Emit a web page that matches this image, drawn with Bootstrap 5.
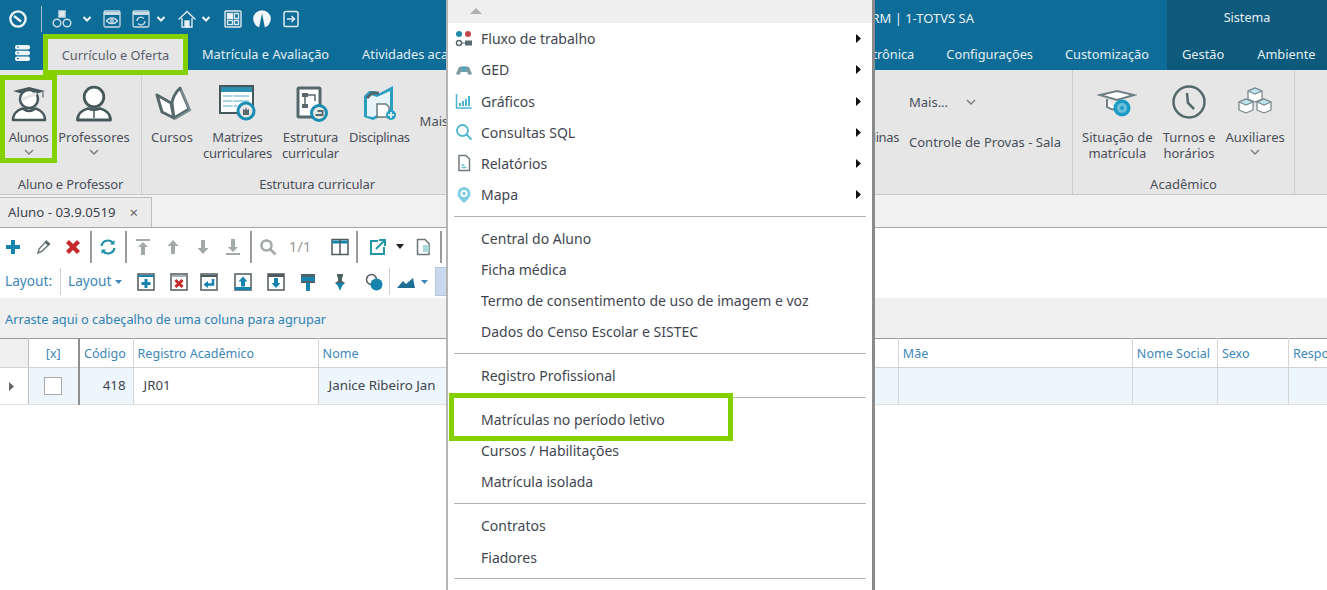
<!DOCTYPE html>
<html lang="pt-BR"><head><meta charset="utf-8"><title>TOTVS RM</title>
<link href="https://cdn.jsdelivr.net/npm/bootstrap@5.3.0/dist/css/bootstrap.min.css" rel="stylesheet">
<style>
html,body{margin:0;height:590px;overflow:hidden;background:#fff}
body{font-family:"Noto Sans","Open Sans",sans-serif;font-size:13px;color:#4a4f57;width:1327px;position:relative}
svg{display:block;flex:none}
.titlebar{height:36px;background:#0e6d98;color:#e8f0f4;padding-top:1px}
.sysbox{width:160px;background:#0d5a7c;height:36px;margin-top:-1px;padding-top:1px;justify-content:center;font-size:12.6px}
.qsep{width:1px;height:26px;background:#9fc0d0}
.g3{margin-left:3px}.g4{margin-left:4px}.g5{margin-left:5px}.g6{margin-left:6px}.g7{margin-left:7px}.g8{margin-left:8px}.g9{margin-left:9px}.g10{margin-left:10px}.g11{margin-left:11px}.g12{margin-left:12px}.g13{margin-left:13px}.g14{margin-left:14px}.g15{margin-left:15px}.g16{margin-left:16px}.g19{margin-left:19px}
.orgname{margin-right:193px;font-size:13px}
.tabsbar{height:34px;background:#0e6d98;color:#e4eef3;font-size:12.8px}
.tablink{white-space:nowrap;line-height:36px}
.tabs-l{gap:33px;margin-left:19px}.tabs-r{gap:32px;padding-right:18px}
.menuglyph{width:48px;padding-left:14px}
.tabon{position:relative;z-index:2;width:135px;height:31px;margin-top:3px;background:#e6e6e6;color:#59606a;outline:5px solid #84d000;text-align:center;line-height:32px}
.sysnav{width:160px;background:#0d5a7c;gap:33px;padding-left:15px;overflow:hidden}
.ribbon{height:125px;background:#e6e6e6;border-bottom:1px solid #c9c9c9;color:#4a4f5a}
.rgroup{border-right:1px solid #cfcfcf;height:100%}
.g1w{width:142px}.g2w{width:351px}.g3w{width:580px}.g4w{width:222px}
.ritems{flex:1 1 auto;min-height:0}
.ritem{padding-top:13px;line-height:16px;text-align:center}
.ritem svg{margin-bottom:6px}
.tight1{letter-spacing:-.15px}.tight2{letter-spacing:-.25px}.tight3{letter-spacing:-.4px}
.gi2{gap:10px;padding-left:9px}
.gi3{gap:10px;padding-right:11px;justify-content:flex-end}
.gi4{gap:10px;padding-left:9px}
.rstudent{width:57px;padding-top:8px;height:88px;margin-top:5px;box-shadow:inset 0 0 0 5px #84d000}
.rteacher{width:72px;padding-top:13px;margin-left:1px}
.chev{margin-top:4px}
.rlabel{text-align:center;line-height:20px;height:20px}
.rstack{padding-top:22px;text-align:left}
.rmore{gap:18px;height:20px;line-height:20px}
.rctrl{margin-top:20px;line-height:20px;white-space:nowrap;letter-spacing:.03px}
.rmaisl{padding-top:43px;line-height:16px}
.docstrip{height:33px;background:#f1f1f1;border-bottom:1px solid #a8a8a8;align-items:flex-end}
.doctab{width:152px;height:30px;background:#ececec;border:1px solid #bdbdbd;border-left:0;border-bottom:0;padding-left:8px;gap:14px;line-height:28px;color:#3d434c;font-size:13.25px}
.xmark{color:#666;font-size:15px;line-height:28px}
.bar1{height:37px;background:#fff}
.bar2{height:33px;background:#fff;color:#3d87b6;font-size:13.7px}
.bsep{width:2px;height:32px;background:#9a9a9a}
.bsepl{width:1px;height:27px;background:#d0d0d0}
.counter{width:24px;color:#9a9a9a;font-size:15px;text-align:center;white-space:nowrap}
.lay1{width:48px}.lay2{width:44px;white-space:nowrap}
.selbox{width:14px;height:29px;background:#c9d8ef;border:1px solid #b4c7e4}
.groupbar{height:40px;background:#f0f0f0;color:#2f82b4;padding-left:5px;line-height:42px;font-size:12.72px}
.gridbox{width:1327px;overflow:hidden}
.gridtb{table-layout:fixed;width:1420px;margin:0;border-collapse:collapse;--bs-table-bg:transparent;border-top:1px solid #9a9a9a}
.gridtb th,.gridtb td{padding:0 4px;font-weight:400;border-right:1px solid #d6d6d6;border-bottom:1px solid #e0e0e0;overflow:hidden;white-space:nowrap;box-shadow:none}
.gridtb th{height:29px;padding-top:3px;font-size:12.55px;color:#3d87b6;background:#fff;border-bottom-color:#d2d2d2;vertical-align:middle}
.gridtb td{height:37px;font-size:13.3px;background:#edf5fd;color:#3f444c;vertical-align:middle}
.gridtb .corner{background:#f0f0f0;border-right-color:#bdbdbd}
.gridtb .rowmark{background:#fff;border-right-color:#bdbdbd;padding:0 0 0 9px}
.gridtb .boxcol{border-right:2px solid #8f8f8f}
.gridtb .cellwhite{background:#fff;padding-left:10px}
.gridtb .cellname{padding-left:10px}
.gridtb .tnum{text-align:right;padding-right:7px}
.markcell{text-align:center;color:#3d87b6}
.cbox{display:block;width:18px;height:18px;margin:auto;background:#fff;border:1px solid #a9a9a9}
.c0{width:28px}.c1{width:51px}.c2{width:54px}.c3{width:185px}.c4{width:541px}.c5{width:39px}.c6{width:234px}.c7{width:85px}.c8{width:71px}.c9{width:131px}
.popmenu.dropdown-menu{position:absolute;z-index:5;display:block;left:446px;top:0;width:429px;height:590px;margin:0;padding:0;background:#fff;border:0;border-left:2px solid #b5b5b5;border-right:3px solid #8a8a8a;border-radius:0;box-shadow:none;overflow:hidden;font-size:14px}
.pophead{height:23px;background:#efefef;padding:8px 0 0 22px}
.popmenu .dropdown-item{height:31.15px;padding:.5px 0 0 7px;display:flex;align-items:center;gap:8px;color:#3f4650;position:relative;width:424px}
.mico{width:18px;height:18px;flex:none}
.arr{margin-left:auto;margin-right:11px}
.popmenu .dropdown-divider{margin:5.9px 8px 5.9px 6px;border-top:1px solid #b3b3b3;opacity:1;width:412px}
.flagged::after{content:"";position:absolute;left:1px;top:-11px;width:284px;height:48px;border:5px solid #84d000;pointer-events:none}
.popmenu .dropdown-item:hover,.popmenu .dropdown-item:focus{background:transparent;color:#3f4650}
</style></head>
<body>
<div class="titlebar d-flex align-items-center">
  <svg class="g8" width="20" height="20" viewBox="0 0 20 20" fill="none" stroke="#eef4f7" stroke-width="2.4"><circle cx="10" cy="10" r="7.6"/><path d="M6 7l7 5.500"/></svg>
  <span class="qsep g13"></span>
  <svg class="g10" width="20" height="20" viewBox="0 0 20 20" fill="none" stroke="#c9dbe4" stroke-width="1.500"><rect x="7" y="2" width="6" height="6" fill="#dfeaf0"/><circle cx="5" cy="14" r="3.800"/><circle cx="15" cy="14" r="3.800"/></svg>
  <svg class="g10" width="10" height="8" viewBox="0 0 10 8" fill="none" stroke="#eef4f7" stroke-width="2"><path d="M1.500 2l3.500 3.500L8.500 2"/></svg>
  <svg class="g10" width="20" height="20" viewBox="0 0 20 20" fill="none" stroke="#c9dbe4" stroke-width="1.300"><rect x="2" y="2" width="16" height="16" rx="1.500"/><path d="M2 4.500h16" stroke-width="3"/><path d="M4.500 12c3-4 8-4 11 0-3 3.500-8 3.500-11 0z"/><circle cx="10" cy="12" r="1.300"/></svg>
  <svg class="g9" width="20" height="20" viewBox="0 0 20 20" fill="none" stroke="#c9dbe4" stroke-width="1.300"><rect x="2" y="2" width="16" height="16" rx="1.500"/><path d="M2 4.500h16" stroke-width="3"/><path d="M6 12a4 4 0 0 1 7-2.500M14 12a4 4 0 0 1-7 2.500"/></svg>
  <svg class="g5" width="10" height="8" viewBox="0 0 10 8" fill="none" stroke="#eef4f7" stroke-width="2"><path d="M1.500 2l3.500 3.500L8.500 2"/></svg>
  <svg class="g11" width="20" height="20" viewBox="0 0 20 20" fill="none" stroke="#dfeaf0" stroke-width="1.400"><path d="M1.500 10.500L10 2.500l8.500 8M5 9v9h10V9"/><rect x="8" y="12" width="4" height="6" fill="#eef4f7"/></svg>
  <svg class="g4" width="10" height="8" viewBox="0 0 10 8" fill="none" stroke="#eef4f7" stroke-width="2"><path d="M1.500 2l3.500 3.500L8.500 2"/></svg>
  <svg class="g12" width="20" height="20" viewBox="0 0 20 20" fill="none" stroke="#dfeaf0" stroke-width="1.400"><rect x="2" y="2" width="16" height="16" rx="1"/><rect x="4.500" y="4.500" width="5" height="5" fill="#eef4f7"/><rect x="11.500" y="4.500" width="4" height="5"/><rect x="4.500" y="11.500" width="5" height="4"/><rect x="11.500" y="11.500" width="4" height="4"/></svg>
  <svg class="g9" width="20" height="20" viewBox="0 0 20 20"><circle cx="10" cy="10" r="8.800" fill="#f2f6f8"/><path d="M10 4.500L7 19h6z" fill="#0e6d98"/></svg>
  <svg class="g9" width="20" height="20" viewBox="0 0 20 20" fill="none" stroke="#dfeaf0" stroke-width="1.500"><path d="M3 4.500V16a1.500 1.500 0 0 0 1.500 1.500h11A1.500 1.500 0 0 0 17 16V4.500A2 2 0 0 0 15 2.500H5a2 2 0 0 0-2 2z"/><path d="M6 10h7M10.500 7l3 3-3 3"/></svg>
  <span class="ms-auto orgname text-nowrap">RM | 1-TOTVS SA</span>
  <span class="sysbox d-flex align-items-center">Sistema</span>
</div>
<div class="tabsbar d-flex">
  <div class="menuglyph d-flex align-items-center flex-none"><svg width="17" height="18" viewBox="0 0 17 18" fill="#f1f6f8"><rect x="1" y="1" width="15" height="4.500" rx="2"/><rect x="1" y="6.700" width="15" height="4.500" rx="2"/><rect x="1" y="12.400" width="15" height="4.500" rx="2"/><path d="M3 3h2M3 9h2M3 14.500h2" stroke="#0e6d98"/></svg></div>
  <div class="tabon">Currículo e Oferta</div>
  <div class="tabs-l d-flex flex-grow-1 overflow-hidden"><span class="tablink">Matrícula e Avaliação</span><span class="tablink">Atividades acadêmicas</span></div>
  <div class="tabs-r d-flex"><span class="tablink">Secretaria Eletrônica</span><span class="tablink">Configurações</span><span class="tablink">Customização</span></div>
  <div class="sysnav d-flex"><span class="tablink">Gestão</span><span class="tablink">Ambiente</span></div>
</div>
<div class="ribbon d-flex">
  <section class="rgroup g1w d-flex flex-column">
    <div class="ritems d-flex">
      <div class="ritem rstudent tight3 d-flex flex-column align-items-center">
        <svg width="40" height="40" viewBox="0 0 40 40"><path d="M4 8L20 4l16 4-16 5z" fill="#46585c"/><path d="M34 8.500v6" stroke="#7a8a8e" stroke-width="1.500"/><circle cx="20" cy="16" r="9" fill="#fff" stroke="#46585c" stroke-width="2.500"/><path d="M12 15l15-6 1 3-15 6z" fill="#e6e6e6"/><path d="M4 37c0-6 4.500-10 9.500-11.500 4 3 9 3 13 0C31.500 27 36 31 36 37z" fill="#fff" stroke="#46585c" stroke-width="2.500" stroke-linejoin="round"/></svg>
        Alunos
        <svg class="chev" width="10" height="7" viewBox="0 0 10 7" fill="none" stroke="#7b8185" stroke-width="1.500"><path d="M1 1l4 4 4-4"/></svg>
      </div>
      <div class="ritem rteacher d-flex flex-column align-items-center">
        <svg width="40" height="40" viewBox="0 0 40 40" fill="#fff" stroke="#46585c" stroke-width="2.800"><circle cx="20" cy="14" r="9.800"/><path d="M3.500 37c0-6 5-10 10.500-11.500 4 1.500 8 1.500 12 0C31.500 27 36.500 31 36.500 37z" stroke-linejoin="round"/><path d="M20 27v8" stroke-width="1.500"/></svg>
        Professores
        <svg class="chev" width="10" height="7" viewBox="0 0 10 7" fill="none" stroke="#7b8185" stroke-width="1.500"><path d="M1 1l4 4 4-4"/></svg>
      </div>
    </div>
    <div class="rlabel tight1">Aluno e Professor</div>
  </section>
  <section class="rgroup g2w d-flex flex-column">
    <div class="ritems d-flex gi2 text-nowrap">
      <div class="ritem"><svg class="mx-auto" width="40" height="40" viewBox="0 0 40 40"><path d="M5 12l14 8 3 15L10 29z" fill="#fff" stroke="#56686c" stroke-width="3" stroke-linejoin="round"/><path d="M20 20c1-7 5-12 8-15l9 21-15 9z" fill="#fff" stroke="#56686c" stroke-width="2.800" stroke-linejoin="round"/><path d="M29 7l9 20-15 9" fill="none" stroke="#7d8c90" stroke-width="2"/></svg>Cursos</div>
      <div class="ritem tight2"><svg class="mx-auto" width="40" height="40" viewBox="0 0 40 40"><rect x="3" y="3" width="33" height="27" fill="#fff" stroke="#46585c" stroke-width="2"/><rect x="4" y="4" width="31" height="5" fill="#2c8fb0"/><path d="M6 13h26M6 18h26M6 23h14" stroke="#a8d4e6" stroke-width="2"/><path d="M16 11v14" stroke="#fff"/><circle cx="29" cy="28" r="8" fill="#e6e6e6" stroke="#1a8db2" stroke-width="3"/><path d="M26 32v-6l2 1 1-3 1 3 2-1v6z" fill="#5a6a6e"/></svg>Matrizes<br>curriculares</div>
      <div class="ritem tight1"><svg class="mx-auto" width="40" height="40" viewBox="0 0 40 40" fill="none"><rect x="7" y="5" width="22" height="29" rx="1" fill="#fff" stroke="#56686c" stroke-width="3"/><path d="M11 10h6v4h-6zM11 21h6v4h-6z" fill="#56686c"/><path d="M17 12h7v6M14 14v7" stroke="#56686c" stroke-width="1.500"/><circle cx="28" cy="30" r="7.500" fill="#e6e6e6" stroke="#1a8db2" stroke-width="3"/><path d="M24.500 32h7v-4h-5" stroke="#56686c" stroke-width="2"/></svg>Estrutura<br>curricular</div>
      <div class="ritem tight3"><svg class="mx-auto" width="40" height="40" viewBox="0 0 40 40" fill="none"><path d="M5 34V13l5-5h7l2 3 15-8v25L14 37z" fill="#2b9fc2"/><path d="M8 33V15l4-3 6 2 13-6v18L14 34z" fill="#e6f3f7"/><path d="M8 15l5-5h7" stroke="#55666a" stroke-width="3"/><path d="M18 21h9l3 3v10H18z" fill="#fff" stroke="#6c7b7f" stroke-width="1.500"/><circle cx="32" cy="32" r="5" fill="#2b9fc2"/><path d="M29 32h6M32 29v6" stroke="#fff" stroke-width="1.500"/></svg>Disciplinas</div>
      <div class="ritem rmaisl">Mais...</div>
    </div>
    <div class="rlabel tight1">Estrutura curricular</div>
  </section>
  <section class="rgroup g3w d-flex flex-column">
    <div class="ritems d-flex gi3 text-nowrap">
      <div class="ritem tight3"><svg class="mx-auto" width="40" height="40" viewBox="0 0 40 40"></svg>Disciplinas</div>
      <div class="rstack">
        <div class="rmore d-flex align-items-center">Mais...<svg width="10" height="7" viewBox="0 0 10 7" fill="none" stroke="#7b8185" stroke-width="1.500"><path d="M1 1l4 4 4-4"/></svg></div>
        <div class="rctrl">Controle de Provas - Sala</div>
      </div>
    </div>
    <div class="rlabel">&nbsp;</div>
  </section>
  <section class="rgroup g4w d-flex flex-column">
    <div class="ritems d-flex gi4 text-nowrap">
      <div class="ritem"><svg class="mx-auto" width="40" height="40" viewBox="0 0 40 40"><path d="M3 12L20 8l17 4-17 5z" fill="#fff" stroke="#6f8084" stroke-width="2"/><path d="M10 16v8c3 2 6 3 9 3" fill="#fff" stroke="#6f8084" stroke-width="2"/><circle cx="25" cy="25" r="8.500" fill="#1b9bc4"/><circle cx="25" cy="25" r="5" fill="#6ec0da"/><circle cx="25" cy="25" r="2" fill="#1b9bc4"/></svg>Situação de<br>matrícula</div>
      <div class="ritem"><svg class="mx-auto" width="40" height="40" viewBox="0 0 40 40" fill="none" stroke="#56686c" stroke-width="2.500"><circle cx="20" cy="19" r="15.500"/><path d="M18 10l1 10 6 6"/></svg>Turnos e<br>horários</div>
      <div class="ritem d-flex flex-column align-items-center"><svg width="40" height="40" viewBox="0 0 40 40" stroke="#7a8a8e" stroke-width="1.300" stroke-linejoin="round"><path d="M13 8l7-3 7 3v8l-7 3-7-3z" fill="#fff"/><path d="M13 8l7 3 7-3-7-3z" fill="#bfe4ee"/><path d="M4 19l7-3 7 3v8l-7 3-7-3z" fill="#fff"/><path d="M4 19l7 3 7-3-7-3z" fill="#bfe4ee"/><path d="M22 19l7-3 7 3v8l-7 3-7-3z" fill="#fff"/><path d="M22 19l7 3 7-3-7-3z" fill="#bfe4ee"/></svg>Auxiliares<svg class="chev" width="10" height="7" viewBox="0 0 10 7" fill="none" stroke="#7b8185" stroke-width="1.500"><path d="M1 1l4 4 4-4"/></svg></div>
    </div>
    <div class="rlabel">Acadêmico</div>
  </section>
</div>
<div class="docstrip d-flex"><div class="doctab d-flex">Aluno - 03.9.0519<span class="xmark">×</span></div></div>
<div class="bar1 d-flex align-items-center">
  <svg class="g4" width="18" height="18" viewBox="0 0 18 18"><path d="M7 2h4v5h5v4h-5v5H7v-5H2V7h5z" fill="#1583ad"/></svg>
  <svg class="g13" width="18" height="18" viewBox="0 0 18 18" fill="none" stroke="#707a7d" stroke-width="1.500"><path d="M3 15l1-4 7.500-8 3 3-8 7.500z" fill="#fff"/><path d="M10.500 4l3.500 3" stroke="#4f6266" stroke-width="2"/></svg>
  <svg class="g11" width="18" height="18" viewBox="0 0 18 18"><path d="M2 5l3-3 4 4 4-4 3 3-4 4 4 4-3 3-4-4-4 4-3-3 4-4z" fill="#c62a2a"/></svg>
  <span class="bsep g8"></span>
  <svg class="g7" width="18" height="18" viewBox="0 0 18 18" fill="none" stroke="#1d8fa8" stroke-width="2.200"><path d="M2.500 8a6.500 6.500 0 0 1 11.500-3"/><path d="M15.500 10a6.500 6.500 0 0 1-11.500 3"/><path d="M15.500 2v4.500H11z" fill="#1d8fa8" stroke="none"/><path d="M2.500 16v-4.500H7z" fill="#1d8fa8" stroke="none"/></svg>
  <span class="bsep g8"></span>
  <svg class="g7" width="18" height="18" viewBox="0 0 18 18" fill="#a3a8a8"><path d="M2 1h14v2H2zM9 4l5 5h-3v8H7V9H4z"/></svg>
  <svg class="g12" width="18" height="18" viewBox="0 0 18 18" fill="#a3a8a8"><path d="M9 2l5.500 6H11v8H7V8H3.500z"/></svg>
  <svg class="g12" width="18" height="18" viewBox="0 0 18 18" fill="#a3a8a8"><path d="M9 16l5.500-6H11V2H7v8H3.500z"/></svg>
  <svg class="g12" width="18" height="18" viewBox="0 0 18 18" fill="#a3a8a8"><path d="M2 15h14v2H2zM9 14l5-5h-3V1H7v8H4z"/></svg>
  <span class="bsep g8"></span>
  <svg class="g7" width="18" height="18" viewBox="0 0 18 18" fill="none" stroke="#a3a8a8" stroke-width="2.500"><circle cx="7.500" cy="7.500" r="5"/><path d="M11 11l5.500 5.500"/></svg>
  <span class="counter g11">1/1</span>
  <svg class="g19" width="18" height="18" viewBox="0 0 18 18" fill="none" stroke="#4f5a5e" stroke-width="1.500"><rect x="1" y="1.500" width="16" height="15" fill="#fff"/><path d="M1 4h16" stroke="#1583ad" stroke-width="3"/><path d="M9 2v14.500"/></svg>
  <span class="bsep g7"></span>
  <svg class="g11" width="18" height="18" viewBox="0 0 18 18" fill="none" stroke="#2596a8" stroke-width="2"><path d="M9 3H2v13h13V9"/><path d="M7 11l8-8M10 2h6v6" /></svg>
  <svg class="g9" width="8" height="5" viewBox="0 0 8 5"><path d="M0 0h8L4 5z" fill="#222"/></svg>
  <svg class="g10" width="18" height="18" viewBox="0 0 18 18" fill="none" stroke="#6b7578" stroke-width="1.500"><path d="M3.500 1.500H11L15 5.500V16.500H3.500z" fill="#fff"/><rect x="9" y="7" width="6" height="7" fill="#a9d8d8" stroke="none"/></svg>
  <span class="bsep g8"></span>
</div>
<div class="bar2 d-flex align-items-center">
  <span class="lay1 g5">Layout:</span>
  <span class="bsepl g7"></span>
  <span class="lay2 g7">Layout</span>
  <svg class="g3" width="7" height="4" viewBox="0 0 7 4"><path d="M0 0h7L3.500 4z" fill="#3d87b6"/></svg>
  <svg class="g15" width="18" height="18" viewBox="0 0 18 18" fill="none"><rect x="1" y="1" width="16" height="16" stroke="#4f5a5e" stroke-width="1.500"/><path d="M1 3h16" stroke="#1583ad" stroke-width="2"/><path d="M9 6v9M4.500 10.500h9" stroke="#1583ad" stroke-width="3"/></svg>
  <svg class="g15" width="18" height="18" viewBox="0 0 18 18" fill="none"><rect x="1" y="1" width="16" height="16" stroke="#4f5a5e" stroke-width="1.500"/><path d="M1 3h16" stroke="#8a9498" stroke-width="1.500"/><path d="M5.500 7l7 7M12.500 7l-7 7" stroke="#c62a2a" stroke-width="3"/></svg>
  <svg class="g12" width="18" height="18" viewBox="0 0 18 18" fill="none"><rect x="1" y="1" width="16" height="16" stroke="#4f5a5e" stroke-width="1.500"/><path d="M1 3h16" stroke="#4f5a5e" stroke-width="2"/><path d="M13 6v5.500H6" stroke="#1583ad" stroke-width="2.500"/><path d="M8 8v7l-4.500-3.500z" fill="#1583ad"/></svg>
  <svg class="g16" width="18" height="18" viewBox="0 0 18 18" fill="none"><rect x="1" y="1" width="16" height="16" stroke="#4f5a5e" stroke-width="1.500"/><path d="M1 15.500h16" stroke="#1583ad" stroke-width="3"/><path d="M9 3.500l4.500 5H11v5H7v-5H4.500z" fill="#1583ad"/></svg>
  <svg class="g15" width="18" height="18" viewBox="0 0 18 18" fill="none"><rect x="1" y="1" width="16" height="16" stroke="#4f5a5e" stroke-width="1.500"/><path d="M1 2.500h16" stroke="#4f5a5e" stroke-width="3"/><path d="M9 15l4.500-5H11V5H7v5H4.500z" fill="#1583ad"/></svg>
  <svg class="g14" width="18" height="18" viewBox="0 0 18 18"><path d="M2 1h14v3H2z" fill="#4f6266"/><path d="M2 4h14v4H2z" fill="#1583ad"/><path d="M2 8h14v2H2z" fill="#4f6266"/><path d="M7 10h4v8H7z" fill="#1583ad"/></svg>
  <svg class="g14" width="18" height="18" viewBox="0 0 18 18"><path d="M6 1h6v2l-1 2v3l3 2H4l3-2V5L6 3z" fill="#4f6266"/><path d="M4 10h10l-3 3H7z" fill="#1583ad"/><path d="M7 13h4l-2 5z" fill="#1583ad"/></svg>
  <svg class="g16" width="18" height="18" viewBox="0 0 18 18"><circle cx="6.500" cy="6.500" r="5" fill="#fff" stroke="#4f5a5e" stroke-width="1.500"/><circle cx="11.500" cy="11.500" r="6" fill="#1583ad"/></svg>
  <span class="bsepl g6"></span>
  <svg class="g6" width="20" height="18" viewBox="0 0 20 18"><path d="M1 15l6-7 3 3 7-6 2 10z" fill="#1d6f96"/></svg>
  <svg class="g5" width="7" height="4" viewBox="0 0 7 4"><path d="M0 0h7L3.500 4z" fill="#3d87b6"/></svg>
  <span class="selbox g7"></span>
</div>
<div class="groupbar">Arraste aqui o cabeçalho de uma coluna para agrupar</div>
<div class="gridbox">
  <table class="table gridtb">
    <colgroup><col class="c0"><col class="c1"><col class="c2"><col class="c3"><col class="c4"><col class="c5"><col class="c6"><col class="c7"><col class="c8"><col class="c9"></colgroup>
    <thead><tr><th class="corner"></th><th class="boxcol markcell">[x]</th><th>Código</th><th>Registro Acadêmico</th><th>Nome</th><th></th><th>Mãe</th><th>Nome Social</th><th>Sexo</th><th>Responsável</th></tr></thead>
    <tbody><tr><td class="rowmark"><svg width="5" height="9" viewBox="0 0 5 9"><path d="M0 0l5 4.500L0 9z" fill="#666"/></svg></td><td class="boxcol"><span class="cbox"></span></td><td class="tnum">418</td><td class="cellwhite">JR01</td><td class="cellname">Janice Ribeiro Jan</td><td></td><td></td><td></td><td></td><td></td></tr></tbody>
  </table>
</div>
<ul class="dropdown-menu popmenu list-unstyled">
  <li class="pophead"><svg width="12" height="6" viewBox="0 0 12 6"><path d="M0 6l6-6 6 6z" fill="#b0b0b0"/></svg></li>
  <li><a class="dropdown-item" href="#"><svg class="mico" viewBox="0 0 18 18"><circle cx="4" cy="4" r="3" fill="#1f8aa8"/><circle cx="13" cy="4" r="3" fill="#c04a4a"/><circle cx="4" cy="13" r="2.500" fill="none" stroke="#5a6a6e" stroke-width="1.500"/><rect x="10" y="10.500" width="7" height="5" fill="#5a6a6e"/><path d="M6.500 13H10" stroke="#5a6a6e"/></svg>Fluxo de trabalho<svg class="arr" width="5" height="9" viewBox="0 0 5 9"><path d="M0 0l5 4.500L0 9z" fill="#111"/></svg></a></li>
  <li><a class="dropdown-item" href="#"><svg class="mico" viewBox="0 0 18 18"><path d="M1 13l3-7c3-1 7-1 10 0l3 7-3 1-2-3H6l-2 3z" fill="#7e9aa3"/><path d="M7 6h4v4H7z" fill="#46a9c8"/></svg>GED<svg class="arr" width="5" height="9" viewBox="0 0 5 9"><path d="M0 0l5 4.500L0 9z" fill="#111"/></svg></a></li>
  <li><a class="dropdown-item" href="#"><svg class="mico" viewBox="0 0 18 18" fill="none" stroke="#4db5d2" stroke-width="1.500"><path d="M1.500 2v14h15"/><path d="M5 14v-3M8 14V9M11 14V7M14 14V4" stroke-width="2"/></svg>Gráficos<svg class="arr" width="5" height="9" viewBox="0 0 5 9"><path d="M0 0l5 4.500L0 9z" fill="#111"/></svg></a></li>
  <li><a class="dropdown-item" href="#"><svg class="mico" viewBox="0 0 18 18" fill="none" stroke="#4db5d2" stroke-width="1.800"><circle cx="7.500" cy="7.500" r="5.500"/><path d="M11.500 11.500l5 5"/></svg>Consultas SQL<svg class="arr" width="5" height="9" viewBox="0 0 5 9"><path d="M0 0l5 4.500L0 9z" fill="#111"/></svg></a></li>
  <li><a class="dropdown-item" href="#"><svg class="mico" viewBox="0 0 18 18" fill="none" stroke="#6f7c80" stroke-width="1.500"><path d="M4 1.500h7l3.500 3.500v11.500H4z" fill="#fff"/><path d="M6.500 11h3M6.500 13.500h5" stroke="#6fbcd2"/></svg>Relatórios<svg class="arr" width="5" height="9" viewBox="0 0 5 9"><path d="M0 0l5 4.500L0 9z" fill="#111"/></svg></a></li>
  <li><a class="dropdown-item" href="#"><svg class="mico" viewBox="0 0 18 18"><path d="M9 1a6.500 6.500 0 0 0-6.500 6.500C2.500 12 9 17 9 17s6.500-5 6.500-9.500A6.500 6.500 0 0 0 9 1z" fill="#7fcde0"/><circle cx="9" cy="7.500" r="3.500" fill="#fff"/><circle cx="9" cy="7.500" r="1.800" fill="#7fcde0"/></svg>Mapa<svg class="arr" width="5" height="9" viewBox="0 0 5 9"><path d="M0 0l5 4.500L0 9z" fill="#111"/></svg></a></li>
  <li><hr class="dropdown-divider"></li>
  <li><a class="dropdown-item" href="#"><span class="mico"></span>Central do Aluno</a></li>
  <li><a class="dropdown-item" href="#"><span class="mico"></span>Ficha médica</a></li>
  <li><a class="dropdown-item" href="#"><span class="mico"></span>Termo de consentimento de uso de imagem e voz</a></li>
  <li><a class="dropdown-item" href="#"><span class="mico"></span>Dados do Censo Escolar e SISTEC</a></li>
  <li><hr class="dropdown-divider"></li>
  <li><a class="dropdown-item" href="#"><span class="mico"></span>Registro Profissional</a></li>
  <li><hr class="dropdown-divider"></li>
  <li><a class="dropdown-item flagged" href="#"><span class="mico"></span>Matrículas no período letivo</a></li>
  <li><a class="dropdown-item" href="#"><span class="mico"></span>Cursos / Habilitações</a></li>
  <li><a class="dropdown-item" href="#"><span class="mico"></span>Matrícula isolada</a></li>
  <li><hr class="dropdown-divider"></li>
  <li><a class="dropdown-item" href="#"><span class="mico"></span>Contratos</a></li>
  <li><a class="dropdown-item" href="#"><span class="mico"></span>Fiadores</a></li>
  <li><hr class="dropdown-divider"></li>
</ul>
</body></html>
